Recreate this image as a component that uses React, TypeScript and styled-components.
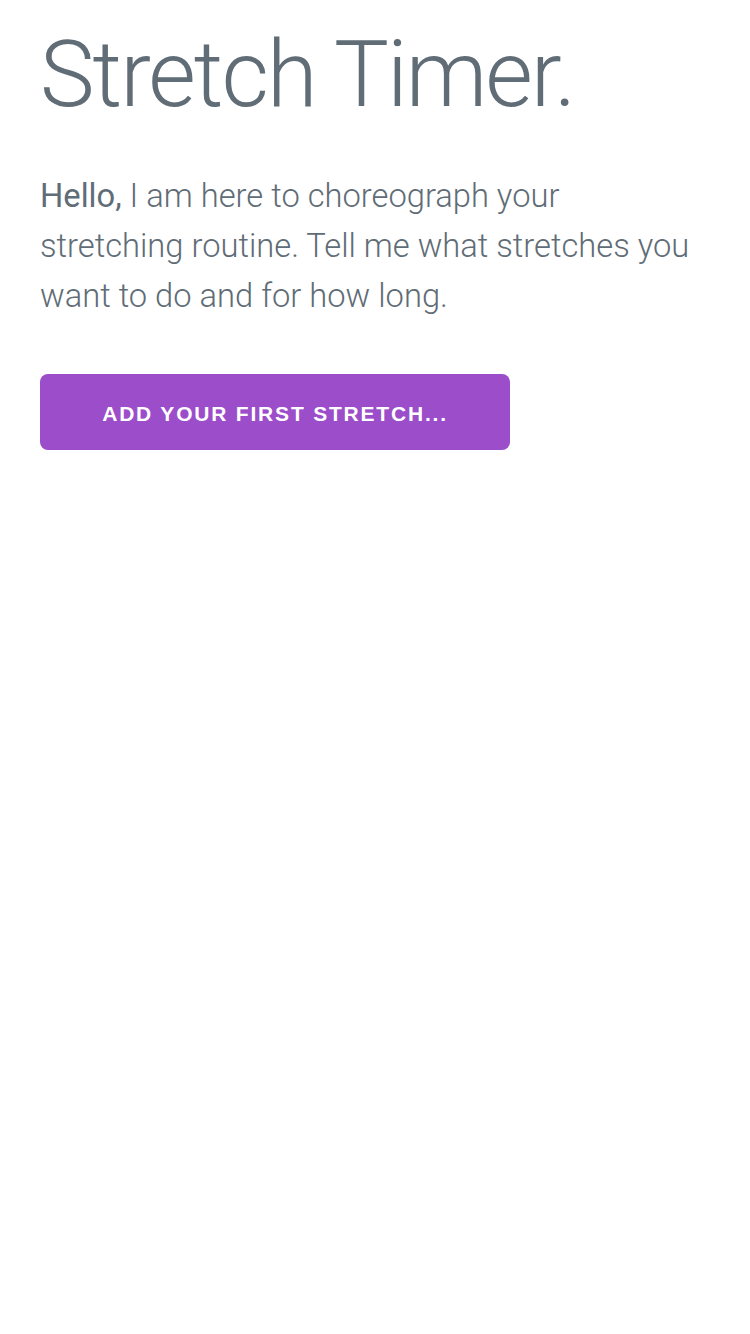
import React from "react";
import styled, { createGlobalStyle } from "styled-components";

const GlobalStyle = createGlobalStyle`
  html, body {
    margin: 0;
    padding: 0;
    background: #fff;
  }
  body {
    font-family: Roboto, "Liberation Sans", sans-serif;
    color: #606c76;
  }
`;

const Container = styled.div`
  padding: 20px 40px 0;
`;

const Title = styled.h1`
  margin: 0 0 41px;
  font-size: 92px;
  font-weight: 300;
  line-height: 1.2;
  letter-spacing: -2px;
  color: #606c76;
`;

const Intro = styled.p`
  margin: 0 0 53px;
  font-size: 32.7px;
  font-weight: 300;
  line-height: 50px;
  color: #606c76;

  strong {
    font-weight: 400;
  }
`;

const Button = styled.button`
  display: inline-flex;
  align-items: center;
  justify-content: center;
  width: 470px;
  height: 76px;
  padding: 3px 0 0;
  border: none;
  border-radius: 8px;
  background: #9b4dca;
  color: #fff;
  font-family: "Liberation Sans", Arial, sans-serif;
  font-size: 21px;
  font-weight: 700;
  letter-spacing: 1.8px;
  text-transform: uppercase;
  cursor: pointer;
`;

export default function App() {
  return (
    <>
      <GlobalStyle />
      <Container>
        <Title>Stretch Timer.</Title>
        <Intro>
          <strong>Hello,</strong> I am here to choreograph your stretching
          routine. Tell me what stretches you want to do and for how long.
        </Intro>
        <Button>Add your first stretch...</Button>
      </Container>
    </>
  );
}
